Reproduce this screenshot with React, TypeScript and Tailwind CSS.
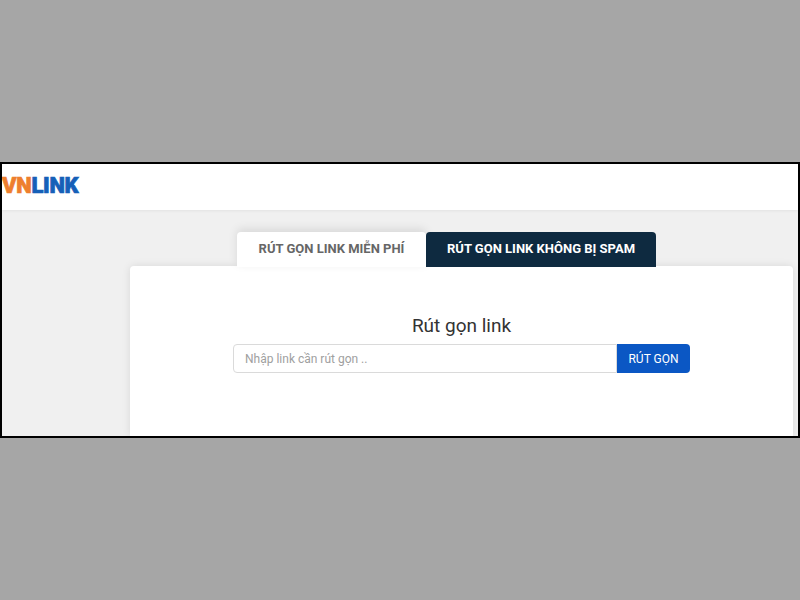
export default function App() {
  return (
    <div className="h-[600px] w-[800px] overflow-hidden bg-[#a6a6a6] pt-[162px] font-['Roboto',sans-serif]">
      <div className="flex h-[276px] flex-col overflow-hidden border-2 border-black bg-[#f0f0f0]">
        <header className="flex h-[46px] shrink-0 items-center bg-white pb-[2px] shadow-[0_1px_3px_rgba(0,0,0,0.06)]">
          <div className="text-[22px] leading-none font-black tracking-[-0.3px] [-webkit-text-stroke:0.7px]">
            <span className="text-[#ee7f2d]">VN</span>
            <span className="text-[#1560b8]">LINK</span>
          </div>
        </header>
        <main className="flex flex-1 flex-col pt-[22px] pr-[5px] pl-[128px]">
          <div className="relative z-10 flex h-[35px] shrink-0 pl-[107px]">
            <div className="flex w-[189px] items-center justify-center rounded-t-[4px] bg-white pb-[2px] text-[13px] font-bold text-[#666666] shadow-[0_-3px_10px_rgba(0,0,0,0.1)]">
              RÚT GỌN LINK MIỄN PHÍ
            </div>
            <div className="flex w-[230px] items-center justify-center rounded-t-[4px] bg-[#0e2a40] pb-[2px] text-[13px] font-bold text-white">
              RÚT GỌN LINK KHÔNG BỊ SPAM
            </div>
          </div>
          <section className="-mt-px flex flex-1 flex-col items-center rounded-t-[4px] bg-white pt-[48px] shadow-[0_0_8px_rgba(0,0,0,0.1)]">
            <h1 className="text-[19px] leading-6 font-normal text-[#333333]">Rút gọn link</h1>
            <div className="mt-[6px] flex h-[29px] w-[457px]">
              <div className="flex flex-1 items-center rounded-l-[4px] border border-[#dadada] bg-white pl-[11px] text-[12px] text-[#a0a0a0]">
                Nhập link cần rút gọn ..
              </div>
              <button className="w-[73px] rounded-r-[4px] bg-[#0b57c4] text-[12px] text-white">
                RÚT GỌN
              </button>
            </div>
          </section>
        </main>
      </div>
    </div>
  );
}
